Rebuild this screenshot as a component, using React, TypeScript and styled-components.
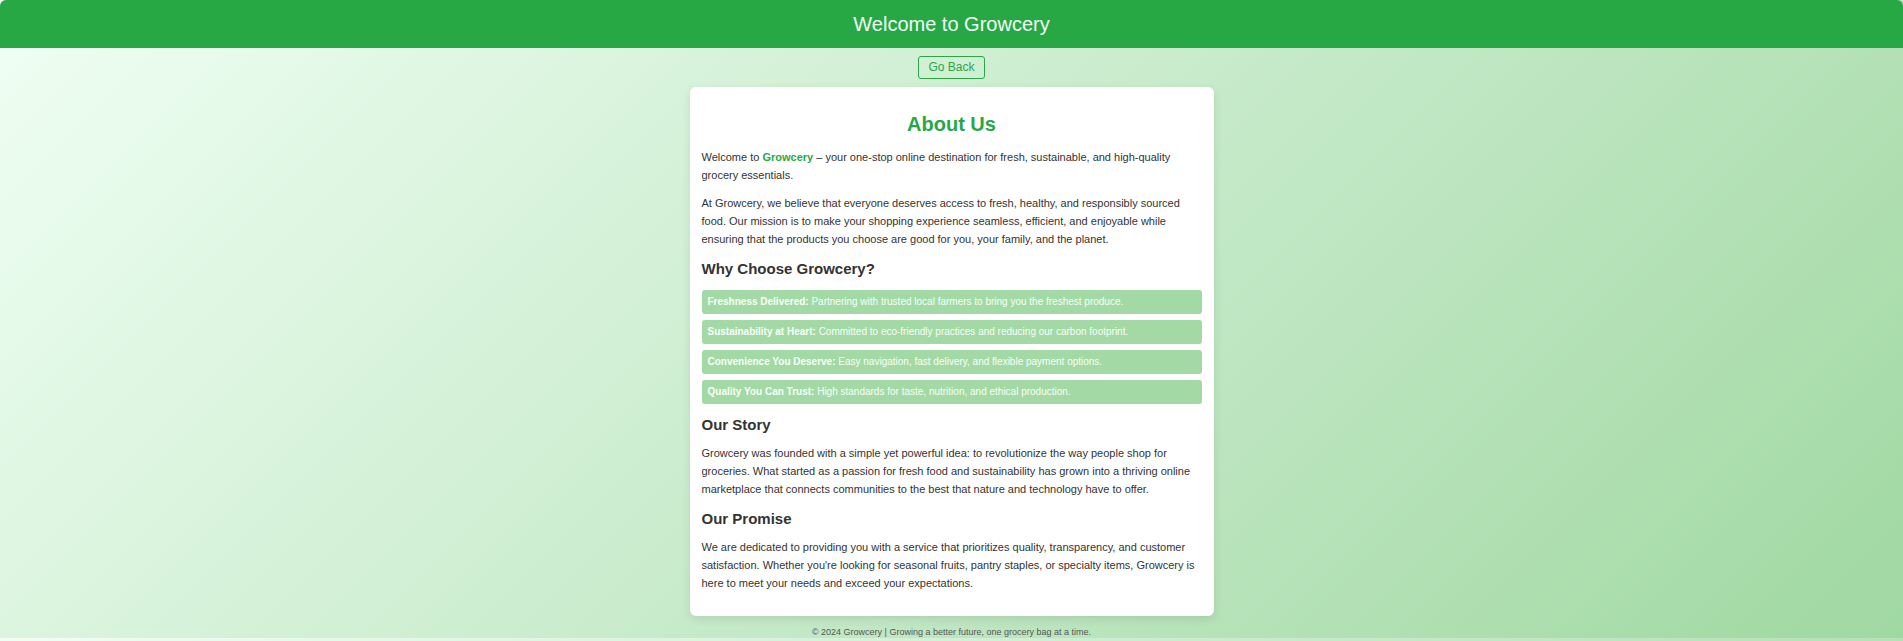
import React from "react";
import styled, { createGlobalStyle } from "styled-components";

const GlobalStyle = createGlobalStyle`
  * {
    box-sizing: border-box;
  }
  body {
    margin: 0;
    font-family: "Liberation Sans", Arial, Helvetica, sans-serif;
    color: #333;
    background: linear-gradient(135deg, #f0fff4, #c8ebcb, #a0d8a2);
  }
`;

const Page = styled.div`
  display: flex;
  flex-direction: column;
  align-items: center;
`;

const Header = styled.header`
  align-self: stretch;
  padding: 12px;
  border-radius: 6px 6px 0 0;
  background: #28a745;
  color: #f0fff4;
  font-size: 20px;
  line-height: 24px;
  text-align: center;
`;

const BackButton = styled.button`
  margin: 8px 0;
  padding: 0 9px 1px;
  border: 1px solid #28a745;
  border-radius: 3px;
  background: transparent;
  color: #28a745;
  font-family: inherit;
  font-size: 12px;
  line-height: 20px;
  cursor: pointer;
`;

const Card = styled.main`
  width: 100%;
  max-width: 524px;
  padding: 24px 12px;
  border-radius: 6px;
  background: #fff;
  box-shadow: 0 3px 10px rgba(0, 0, 0, 0.1);
`;

const Title = styled.h1`
  margin: 0 0 11px;
  color: #28a745;
  font-size: 20px;
  line-height: 26px;
  text-align: center;
`;

const Heading = styled.h2`
  margin: 10px 0 8px;
  font-size: 15px;
  line-height: 22px;
`;

const Text = styled.p`
  margin: 0 0 10px;
  font-size: 11px;
  line-height: 18px;

  &:last-child {
    margin-bottom: 0;
  }
`;

const Brand = styled.strong`
  color: #28a745;
`;

const Features = styled.ul`
  display: flex;
  flex-direction: column;
  gap: 6px;
  margin: 10px 0;
  padding: 0;
  list-style: none;
`;

const Feature = styled.li`
  padding: 4px 6px;
  border-radius: 3px;
  background: #a3d9a5;
  color: #f8fff9;
  font-size: 10px;
  line-height: 16px;
`;

const Footer = styled.footer`
  padding-top: 10px;
  color: #555;
  font-size: 9px;
  line-height: 12px;
  text-align: center;
`;

const features = [
  {
    name: "Freshness Delivered:",
    detail: "Partnering with trusted local farmers to bring you the freshest produce.",
  },
  {
    name: "Sustainability at Heart:",
    detail: "Committed to eco-friendly practices and reducing our carbon footprint.",
  },
  {
    name: "Convenience You Deserve:",
    detail: "Easy navigation, fast delivery, and flexible payment options.",
  },
  {
    name: "Quality You Can Trust:",
    detail: "High standards for taste, nutrition, and ethical production.",
  },
];

export default function App() {
  return (
    <Page>
      <GlobalStyle />
      <Header>Welcome to Growcery</Header>
      <BackButton type="button">Go Back</BackButton>
      <Card>
        <Title>About Us</Title>
        <Text>
          Welcome to <Brand>Growcery</Brand> – your one-stop online destination for fresh,
          sustainable, and high-quality grocery essentials.
        </Text>
        <Text>
          At Growcery, we believe that everyone deserves access to fresh, healthy, and responsibly
          sourced food. Our mission is to make your shopping experience seamless, efficient, and
          enjoyable while ensuring that the products you choose are good for you, your family, and
          the planet.
        </Text>
        <Heading>Why Choose Growcery?</Heading>
        <Features>
          {features.map((feature) => (
            <Feature key={feature.name}>
              <strong>{feature.name}</strong> {feature.detail}
            </Feature>
          ))}
        </Features>
        <Heading>Our Story</Heading>
        <Text>
          Growcery was founded with a simple yet powerful idea: to revolutionize the way people
          shop for groceries. What started as a passion for fresh food and sustainability has grown
          into a thriving online marketplace that connects communities to the best that nature and
          technology have to offer.
        </Text>
        <Heading>Our Promise</Heading>
        <Text>
          We are dedicated to providing you with a service that prioritizes quality, transparency,
          and customer satisfaction. Whether you're looking for seasonal fruits, pantry staples, or
          specialty items, Growcery is here to meet your needs and exceed your expectations.
        </Text>
      </Card>
      <Footer>© 2024 Growcery | Growing a better future, one grocery bag at a time.</Footer>
    </Page>
  );
}
